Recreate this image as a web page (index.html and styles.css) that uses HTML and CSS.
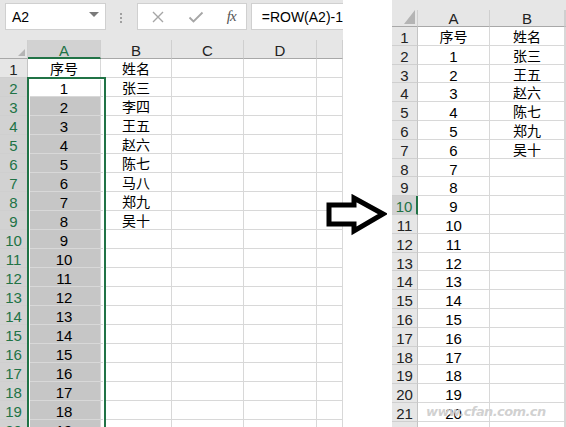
FILE: index.html
```html
<!DOCTYPE html>
<html lang="zh-CN">
<head>
    <meta charset="UTF-8">
    <meta name="viewport" content="width=device-width, initial-scale=1.0">
    <title>ROW 序号</title>
    <link rel="stylesheet" href="styles.css">
</head>
<body>

<div class="pane left">
    <div class="formula-bar">
        <div class="name-box"><span>A2</span><i class="caret"></i></div>
        <div class="grip"><i></i><i></i><i></i></div>
        <div class="fx-box">
            <svg class="btn-icon" width="14" height="14" viewBox="0 0 14 14"><path d="M2 2 L12 12 M12 2 L2 12" stroke="#a6a6a6" stroke-width="1.4" fill="none"/></svg>
            <svg class="btn-icon" width="16" height="14" viewBox="0 0 16 14"><path d="M1.5 7.5 L5.5 11.5 L14.5 2.5" stroke="#a6a6a6" stroke-width="1.8" fill="none"/></svg>
            <span class="fx">fx</span>
        </div>
        <div class="formula">=ROW(A2)-1</div>
    </div>

    <div class="sheet">
        <div class="row head"><div class="c corner"></div><div class="c on">A</div><div class="c">B</div><div class="c">C</div><div class="c">D</div><div class="c"></div></div>
        <div class="row"><div class="c h">1</div><div class="c cjk">序号</div><div class="c cjk">姓名</div><div class="c"></div><div class="c"></div><div class="c"></div></div>
        <div class="row"><div class="c h on">2</div><div class="c">1</div><div class="c cjk">张三</div><div class="c"></div><div class="c"></div><div class="c"></div></div>
        <div class="row"><div class="c h on">3</div><div class="c sel">2</div><div class="c cjk">李四</div><div class="c"></div><div class="c"></div><div class="c"></div></div>
        <div class="row"><div class="c h on">4</div><div class="c sel">3</div><div class="c cjk">王五</div><div class="c"></div><div class="c"></div><div class="c"></div></div>
        <div class="row"><div class="c h on">5</div><div class="c sel">4</div><div class="c cjk">赵六</div><div class="c"></div><div class="c"></div><div class="c"></div></div>
        <div class="row"><div class="c h on">6</div><div class="c sel">5</div><div class="c cjk">陈七</div><div class="c"></div><div class="c"></div><div class="c"></div></div>
        <div class="row"><div class="c h on">7</div><div class="c sel">6</div><div class="c cjk">马八</div><div class="c"></div><div class="c"></div><div class="c"></div></div>
        <div class="row"><div class="c h on">8</div><div class="c sel">7</div><div class="c cjk">郑九</div><div class="c"></div><div class="c"></div><div class="c"></div></div>
        <div class="row"><div class="c h on">9</div><div class="c sel">8</div><div class="c cjk">吴十</div><div class="c"></div><div class="c"></div><div class="c"></div></div>
        <div class="row"><div class="c h on">10</div><div class="c sel">9</div><div class="c"></div><div class="c"></div><div class="c"></div><div class="c"></div></div>
        <div class="row"><div class="c h on">11</div><div class="c sel">10</div><div class="c"></div><div class="c"></div><div class="c"></div><div class="c"></div></div>
        <div class="row"><div class="c h on">12</div><div class="c sel">11</div><div class="c"></div><div class="c"></div><div class="c"></div><div class="c"></div></div>
        <div class="row"><div class="c h on">13</div><div class="c sel">12</div><div class="c"></div><div class="c"></div><div class="c"></div><div class="c"></div></div>
        <div class="row"><div class="c h on">14</div><div class="c sel">13</div><div class="c"></div><div class="c"></div><div class="c"></div><div class="c"></div></div>
        <div class="row"><div class="c h on">15</div><div class="c sel">14</div><div class="c"></div><div class="c"></div><div class="c"></div><div class="c"></div></div>
        <div class="row"><div class="c h on">16</div><div class="c sel">15</div><div class="c"></div><div class="c"></div><div class="c"></div><div class="c"></div></div>
        <div class="row"><div class="c h on">17</div><div class="c sel">16</div><div class="c"></div><div class="c"></div><div class="c"></div><div class="c"></div></div>
        <div class="row"><div class="c h on">18</div><div class="c sel">17</div><div class="c"></div><div class="c"></div><div class="c"></div><div class="c"></div></div>
        <div class="row"><div class="c h on">19</div><div class="c sel">18</div><div class="c"></div><div class="c"></div><div class="c"></div><div class="c"></div></div>
        <div class="row"><div class="c h on">20</div><div class="c sel">19</div><div class="c"></div><div class="c"></div><div class="c"></div><div class="c"></div></div>
        <div class="selection"></div>
    </div>
</div>

<div class="pane right">
    <div class="top-strip"></div>
    <div class="sheet">
        <div class="row head"><div class="c corner"></div><div class="c">A</div><div class="c">B</div><div class="c"></div></div>
        <div class="row"><div class="c h">1</div><div class="c cjk">序号</div><div class="c cjk">姓名</div><div class="c"></div></div>
        <div class="row"><div class="c h">2</div><div class="c">1</div><div class="c cjk">张三</div><div class="c"></div></div>
        <div class="row"><div class="c h">3</div><div class="c">2</div><div class="c cjk">王五</div><div class="c"></div></div>
        <div class="row"><div class="c h">4</div><div class="c">3</div><div class="c cjk">赵六</div><div class="c"></div></div>
        <div class="row"><div class="c h">5</div><div class="c">4</div><div class="c cjk">陈七</div><div class="c"></div></div>
        <div class="row"><div class="c h">6</div><div class="c">5</div><div class="c cjk">郑九</div><div class="c"></div></div>
        <div class="row"><div class="c h">7</div><div class="c">6</div><div class="c cjk">吴十</div><div class="c"></div></div>
        <div class="row"><div class="c h">8</div><div class="c">7</div><div class="c"></div><div class="c"></div></div>
        <div class="row"><div class="c h">9</div><div class="c">8</div><div class="c"></div><div class="c"></div></div>
        <div class="row"><div class="c h on active">10</div><div class="c">9</div><div class="c"></div><div class="c"></div></div>
        <div class="row"><div class="c h">11</div><div class="c">10</div><div class="c"></div><div class="c"></div></div>
        <div class="row"><div class="c h">12</div><div class="c">11</div><div class="c"></div><div class="c"></div></div>
        <div class="row"><div class="c h">13</div><div class="c">12</div><div class="c"></div><div class="c"></div></div>
        <div class="row"><div class="c h">14</div><div class="c">13</div><div class="c"></div><div class="c"></div></div>
        <div class="row"><div class="c h">15</div><div class="c">14</div><div class="c"></div><div class="c"></div></div>
        <div class="row"><div class="c h">16</div><div class="c">15</div><div class="c"></div><div class="c"></div></div>
        <div class="row"><div class="c h">17</div><div class="c">16</div><div class="c"></div><div class="c"></div></div>
        <div class="row"><div class="c h">18</div><div class="c">17</div><div class="c"></div><div class="c"></div></div>
        <div class="row"><div class="c h">19</div><div class="c">18</div><div class="c"></div><div class="c"></div></div>
        <div class="row"><div class="c h">20</div><div class="c">19</div><div class="c"></div><div class="c"></div></div>
        <div class="row"><div class="c h">21</div><div class="c">20</div><div class="c"></div><div class="c"></div></div>
        <div class="row"><div class="c h"></div><div class="c"></div><div class="c"></div><div class="c"></div></div>
    </div>
    <div class="watermark">www.cfan.com.cn</div>
</div>

<!-- arrow sits over the gap between the two shots -->
<svg class="arrow" width="64" height="42" viewBox="0 0 64 42">
    <polygon points="6,11 31,11 31,4 60,20 31,37 31,30 6,30" fill="#fff" stroke="#000" stroke-width="5" stroke-linejoin="miter"/>
</svg>

</body>
</html>
```

FILE: styles.css
```css
body {
    margin: 0;
    font-family: "Liberation Sans", "Noto Sans CJK SC", sans-serif;
    background-color: #fff;
    color: #000;
    display: flex;
    height: 427px;
    overflow: hidden;
    position: relative;
}

.pane {
    height: 427px;
    overflow: hidden;
    position: relative;
}

.left {
    width: 343px;
}

.right {
    width: 174px;
    margin-left: 49px;
}

/* formula bar */

.formula-bar {
    height: 40px;
    box-sizing: border-box;
    padding: 3px 0 0 5px;
    background-color: #e6e6e6;
    display: flex;
    align-items: flex-start;
}

.name-box,
.fx-box,
.formula {
    height: 27px;
    box-sizing: border-box;
    background: white;
    border: 1px solid #d0d0d0;
    display: flex;
    align-items: center;
}

.name-box {
    width: 101px;
    padding: 0 6px 0 6px;
    justify-content: space-between;
    font-size: 14px;
}

.caret {
    width: 0;
    height: 0;
    border-left: 5px solid transparent;
    border-right: 5px solid transparent;
    border-top: 5px solid #7a7a7a;
    margin-top: -4px;
}

.grip {
    width: 31px;
    display: flex;
    flex-direction: column;
    align-items: center;
    gap: 2px;
    padding-top: 10px;
}

.grip i {
    width: 2px;
    height: 2px;
    background: #a0a0a0;
}

.fx-box {
    width: 110px;
    padding: 0 10px 0 13px;
    justify-content: space-between;
}

.fx {
    font-family: "Liberation Serif", serif;
    font-style: italic;
    font-size: 15px;
    color: #555;
    letter-spacing: -1px;
}

.formula {
    flex: 1;
    margin-left: 4px;
    padding-left: 10px;
    font-size: 14px;
    border-right: none;
}

/* grid */

.sheet {
    position: relative;
}

.row {
    display: grid;
    height: 19px;
}

.left .row {
    grid-template-columns: 28px 73px 71px 72px 73px 26px;
}

.right .row {
    grid-template-columns: 26px 72px 75px 1px;
    height: 18.8px;
}

.c {
    box-sizing: border-box;
    border-right: 1px solid #d8d8d8;
    border-bottom: 1px solid #d8d8d8;
    text-align: center;
    font-size: 15px;
    line-height: 19px;
    padding-top: 1px;
    white-space: nowrap;
    overflow: hidden;
}

.cjk {
    font-size: 14px;
}

.h {
    background-color: #e6e6e6;
    border-right-color: #c4c4c4;
    border-bottom-color: #cfcfcf;
    color: #222;
}

.h.on {
    background-color: #d2d2d2;
    color: #217346;
}

.h.active {
    border-right: 2px solid #217346;
}

.head .c {
    background-color: #e6e6e6;
    border-right-color: #cfcfcf;
    border-bottom-color: #a8a8a8;
    color: #222;
}

.head .c.on {
    background-color: #d2d2d2;
    border-bottom: 2px solid #217346;
    color: #217346;
}

.corner {
    position: relative;
}

.corner::after {
    content: "";
    position: absolute;
    right: 2px;
    bottom: 2px;
    border-left: 7px solid transparent;
    border-bottom: 7px solid #b4b4b4;
}

.right .corner::after {
    border-left-width: 11px;
    border-bottom-width: 14px;
}

.right .head {
    height: 17px;
}

.right .head .c {
    line-height: 17px;
    padding-top: 0;
}

.top-strip {
    height: 10px;
    background-color: #e6e6e6;
}

.sel {
    background-color: #c6c6c6;
}

.selection {
    position: absolute;
    left: 27px;
    top: 37px;
    width: 75px;
    bottom: -10px;
    border: 2px solid #217346;
    box-shadow: inset 0 0 0 1px #fff;
}

.watermark {
    position: absolute;
    left: 34px;
    top: 404px;
    font-family: "DejaVu Sans", sans-serif;
    font-size: 13px;
    font-weight: bold;
    font-style: italic;
    color: rgba(170, 170, 170, 0.55);
    letter-spacing: -0.6px;
    text-shadow: 0 0 1px #fff;
}

.arrow {
    position: absolute;
    left: 323px;
    top: 194px;
}
```
